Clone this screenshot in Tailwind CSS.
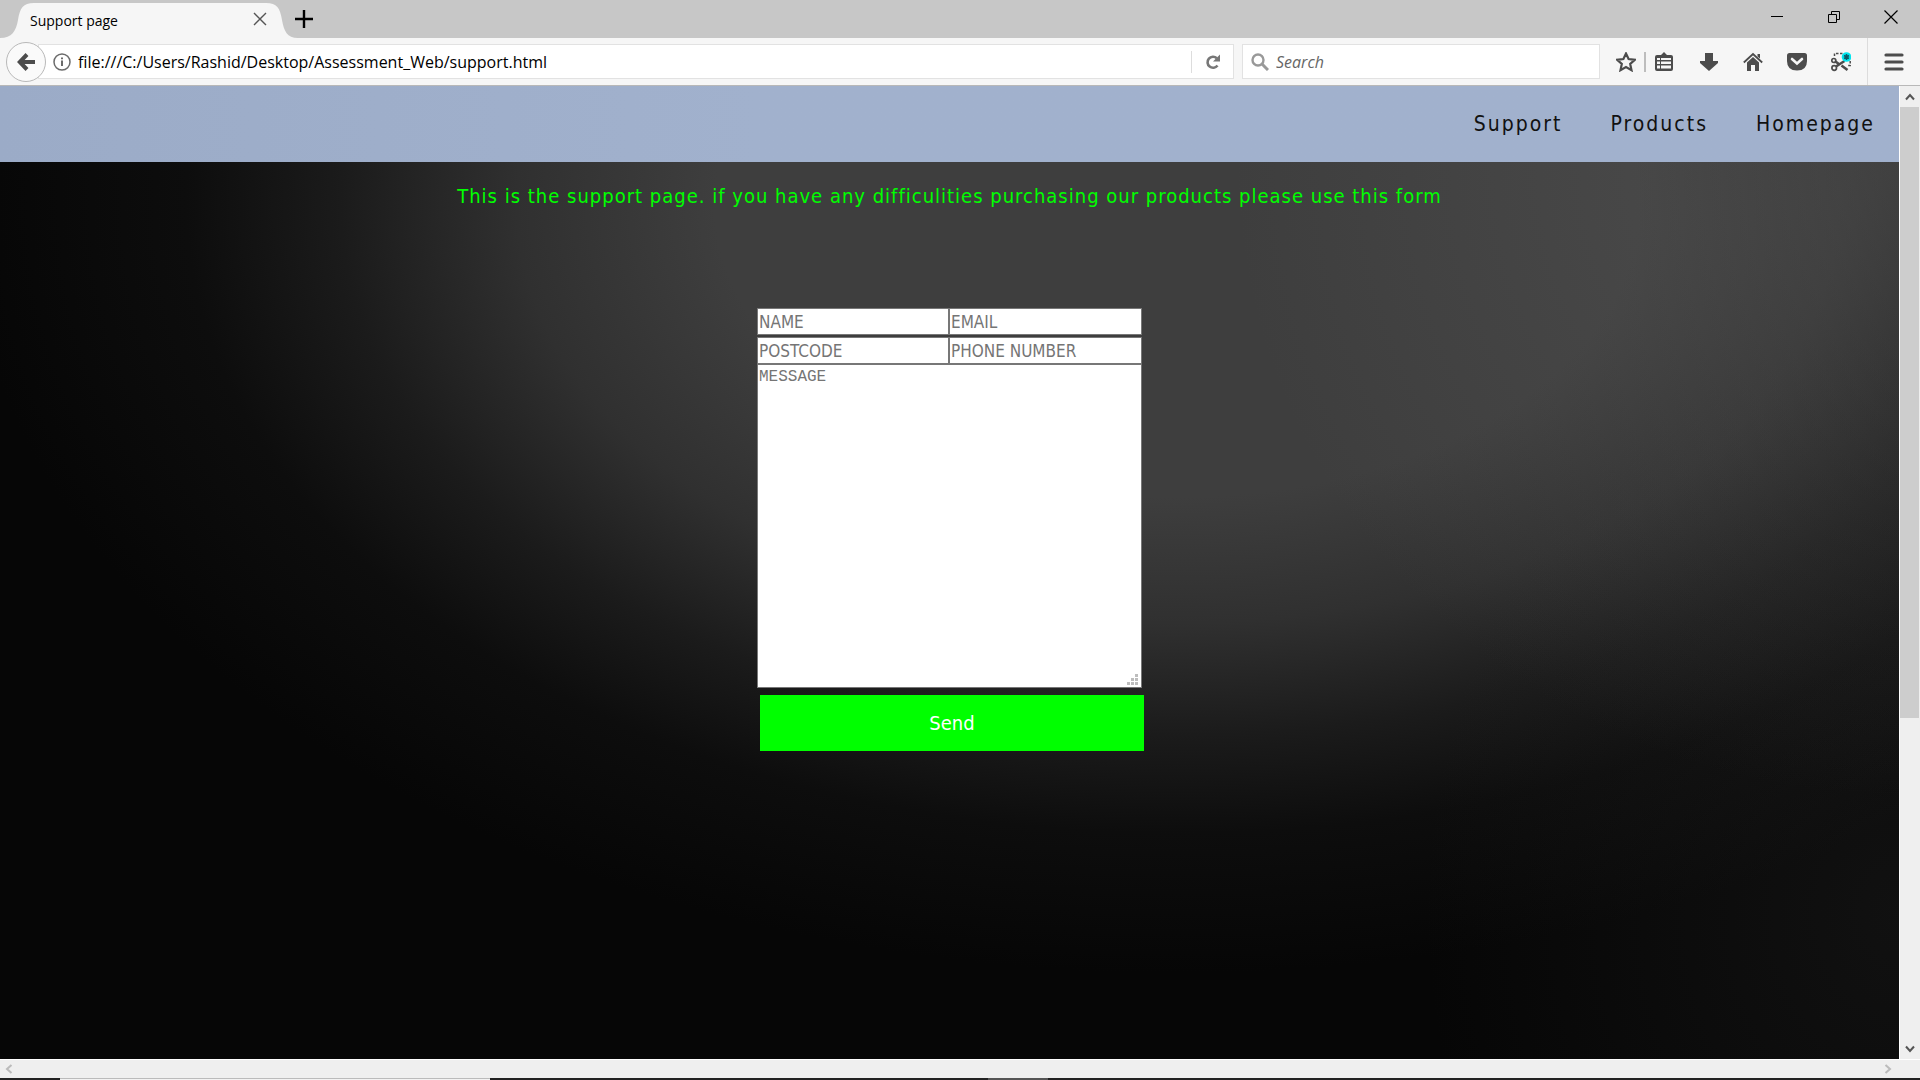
<!DOCTYPE html>
<html lang="en">
<head>
<meta charset="utf-8">
<title>Support page</title>
<script src="https://cdn.jsdelivr.net/npm/@tailwindcss/browser@4"></script>
</head>
<body class="h-screen flex flex-col overflow-hidden bg-[#f6f6f6] font-['Open_Sans',sans-serif] text-black">

<!-- Tab strip -->
<div class="flex h-[38px] shrink-0 bg-[#c7c7c7]">
  <div class="relative flex h-full w-[300px] items-center">
    <svg class="absolute inset-0 h-full w-full" viewBox="0 0 300 38" aria-hidden="true"><path d="M0 38C12 38 16 31 18 20C20 8 23 3 34 3H266C277 3 280 8 282 20C284 31 287 38 298 38Z" fill="#f6f6f6"/></svg>
    <span class="relative flex-1 pl-[30px] pt-[2px] text-[14px]">Support page</span>
    <button class="relative mr-8 size-4" aria-label="Close tab"><svg viewBox="0 0 16 16" class="size-4" stroke="#555" stroke-width="1.4"><path d="M2 2L14 14M14 2L2 14"/></svg></button>
  </div>
  <button class="w-6" aria-label="New tab"><svg viewBox="0 0 18 18" class="ml-[-5px] size-[18px]" stroke="#000" stroke-width="2.4"><path d="M0 9H18M9 0V18"/></svg></button>
  <div class="ml-auto flex items-center gap-[43px] pr-[22px] pb-1">
    <button class="size-[14px]" aria-label="Minimize"><svg viewBox="0 0 14 14" class="size-[14px]" stroke="#000"><path d="M1 6.500H13"/></svg></button>
    <button class="size-[14px]" aria-label="Restore"><svg viewBox="0 0 14 14" class="size-[14px]" fill="none" stroke="#000"><path d="M1.500 4.500H9.500V12.500H1.500ZM4.500 4V1.500H12.500V9.500H10"/></svg></button>
    <button class="size-[14px]" aria-label="Close window"><svg viewBox="0 0 14 14" class="size-[14px]" stroke="#000" stroke-width="1.2"><path d="M0.500 0.500L13.500 13.500M13.500 0.500L0.500 13.500"/></svg></button>
  </div>
</div>

<!-- Navigation toolbar -->
<div class="flex h-12 shrink-0 items-center border-b border-[#b8b8b8] pl-[6px]">
  <button class="z-10 grid size-10 shrink-0 place-items-center rounded-full border border-[#b9b9b9] bg-[#fafafa]" aria-label="Back"><svg viewBox="0 0 18 18" class="size-[18px]" fill="none" stroke="#4c4c4c" stroke-width="4"><path d="M10 1.500L2.800 9L10 16.500M3 9H18"/></svg></button>
  <div class="-ml-2 flex h-[35px] flex-1 items-center border border-[#e2e2e2] bg-white pl-[14px]">
    <svg viewBox="0 0 18 18" class="size-[18px] shrink-0" fill="none" stroke="#6b6b6b"><circle cx="9" cy="9" r="8" stroke-width="1.500"/><path d="M9 7.500V13M9 4.500V6.300" stroke-width="2"/></svg>
    <input aria-label="Address" class="ml-[7px] h-full min-w-0 flex-1 text-[16px] outline-none" value="file:///C:/Users/Rashid/Desktop/Assessment_Web/support.html">
    <button class="grid h-[22px] w-[42px] place-items-center border-l border-[#ddd]" aria-label="Reload"><svg viewBox="0 0 16 16" class="size-4" fill="none" stroke="#777" stroke-width="2.600"><path d="M12.500 11.500A5.500 5.500 0 1 1 11.800 4.200"/><path d="M15 0.500V7.500H8Z" fill="#777" stroke="none"/></svg></button>
  </div>
  <label class="ml-2 flex h-[35px] w-[358px] shrink-0 items-center border border-[#e2e2e2] bg-white pl-2">
    <svg viewBox="0 0 18 18" class="size-[18px]" fill="none" stroke="#999" stroke-width="2.400"><circle cx="7" cy="7" r="5.500"/><path d="M11 11L17 17" stroke-width="3"/></svg>
    <input aria-label="Search" placeholder="Search" class="ml-[7px] h-full min-w-0 flex-1 text-[16px] italic outline-none placeholder:text-[#666]">
  </label>
  <div class="flex h-full shrink-0 items-center text-[#4c4c4c]">
    <button class="ml-4 size-5" aria-label="Bookmark this page"><svg viewBox="0 0 20 20" class="size-5" fill="none" stroke="currentColor" stroke-width="2.200"><path d="M10 1.500L12.600 7L18.800 7.800L14.200 12L15.500 18.200L10 15.100L4.500 18.200L5.800 12L1.200 7.800L7.400 7Z"/></svg></button>
    <span class="ml-2 h-5 w-[2px] bg-[#bdbdbd]"></span>
    <button class="ml-2 size-5" aria-label="Bookmarks"><svg viewBox="0 0 20 20" class="size-5"><path fill="currentColor" d="M10 0L13 3H17Q19 3 19 5V17Q19 19 17 19H3Q1 19 1 17V5Q1 3 3 3H7Z"/><path fill="#f6f6f6" d="M3 6H6V8H3ZM7 6H17V8H7ZM3 9.500H6V12H3ZM7 9.500H17V12H7ZM3 13.500H6V16.500H3ZM7 13.500H17V16.500H7Z"/></svg></button>
    <button class="ml-[25px] size-5" aria-label="Downloads"><svg viewBox="0 0 20 20" class="size-5" fill="currentColor"><path d="M6 1H14V9H19V11L10 19L1 11V9H6Z"/></svg></button>
    <button class="ml-6 size-5" aria-label="Home"><svg viewBox="0 0 20 20" class="size-5"><path d="M0.800 10.500L10 2L19.200 10.500" fill="none" stroke="currentColor" stroke-width="1.800"/><path fill="currentColor" d="M10 5L16 10.500V19H12V13H8V19H4V10.500ZM14.500 2H17V6.500L14.500 4.500Z"/></svg></button>
    <button class="ml-6 size-5" aria-label="Pocket"><svg viewBox="0 0 20 20" class="size-5"><path fill="currentColor" d="M2.500 1H17.500Q20 1 20 3.500V9Q20 18.500 10 18.500Q0 18.500 0 9V3.500Q0 1 2.500 1Z"/><path d="M5 7L10 11.500L15 7" fill="none" stroke="#f6f6f6" stroke-width="2.600" stroke-linecap="round"/></svg></button>
    <button class="ml-6 size-5" aria-label="Screen capture"><svg viewBox="0 0 20 20" class="size-5" fill="none" stroke="currentColor"><path d="M3.500 4V1.500H12M19.200 9V13.500H17" stroke-width="1.500" stroke-dasharray="2.500 1.500"/><circle cx="2.800" cy="8.500" r="2" stroke-width="1.700"/><circle cx="3.200" cy="16" r="2.300" stroke-width="1.700"/><path d="M4.500 9.500L7.500 11.700M10.500 13.500L16.500 18M5 14.500L13.500 9" stroke-width="2.600"/><circle cx="15.500" cy="5" r="4.800" fill="#00e5ee" stroke="none"/><path d="M15.500 2V8M13 3.500L18 6.500M18 3.500L13 6.500" stroke="#0c5a66" stroke-width="1.500"/></svg></button>
    <span class="ml-4 h-full w-px bg-[#dcdcdc]"></span>
    <button class="mx-4 h-5 w-5" aria-label="Menu"><svg viewBox="0 0 20 20" class="size-5" stroke="currentColor" stroke-width="3.200" stroke-linecap="round"><path d="M2 3H18M2 10H18M2 17H18"/></svg></button>
  </div>
</div>

<!-- Viewport with scrollbars -->
<div class="flex min-h-0 flex-1">
  <main class="flex min-w-0 flex-1 flex-col bg-[#060606] bg-[radial-gradient(ellipse_35%_65%_at_100%_8%,rgba(100,100,100,0.4),transparent),radial-gradient(ellipse_25%_60%_at_100%_85%,rgba(60,60,60,0.2),transparent),radial-gradient(ellipse_58%_72%_at_62%_12%,#3e3e3e_0%,#3e3e3e_42%,#303030_60%,#1b1b1b_76%,#0d0d0d_90%,transparent_110%)] font-['DejaVu_Sans_Condensed',sans-serif]">
    <nav class="flex h-[76px] shrink-0 items-center justify-end gap-12 bg-linear-to-r from-[#9babc7] to-[#a1b1cd] to-40% pt-[2px] pr-6 text-[21px] tracking-[2px] text-[#111]">
      <a href="#">Support</a>
      <a href="#">Products</a>
      <a href="#">Homepage</a>
    </nav>
    <p class="mt-5 text-center text-[20px] leading-7 tracking-[1px] text-[#00ff00]">This is the support page. if you have any difficulities purchasing our products please use this form</p>
    <form class="mx-auto mt-[98px] w-[385px]">
      <div class="grid grid-cols-[192px_193px] gap-y-[2px] text-[17px]">
        <input aria-label="Name" placeholder="NAME" class="h-[27px] min-w-0 border border-[#777] bg-white px-px placeholder:text-[#757575]">
        <input aria-label="Email" placeholder="EMAIL" class="h-[27px] min-w-0 border border-[#777] bg-white px-px placeholder:text-[#757575]">
        <input aria-label="Postcode" placeholder="POSTCODE" class="h-[27px] min-w-0 border border-[#777] bg-white px-px placeholder:text-[#757575]">
        <input aria-label="Phone number" placeholder="PHONE NUMBER" class="h-[27px] min-w-0 border border-[#777] bg-white px-px placeholder:text-[#757575]">
      </div>
      <div class="relative">
        <textarea aria-label="Message" placeholder="MESSAGE" class="block h-[324px] w-full resize-none border border-[#777] bg-white px-px py-[2px] font-['Liberation_Mono',monospace] text-[16px] leading-5 placeholder:text-[#757575]"></textarea>
        <svg class="absolute right-1 bottom-[3px] h-[11px] w-[11px]" viewBox="0 0 11 11" fill="#bdbdbd" aria-hidden="true"><path d="M8 0H11V3H8ZM4 4H7V7H4ZM8 4H11V7H8ZM0 8H3V11H0ZM4 8H7V11H4ZM8 8H11V11H8Z"/></svg>
      </div>
      <button type="button" class="mt-[7px] ml-[3px] h-14 w-[384px] bg-[#00ff00] text-[20px] text-white">Send</button>
    </form>
  </main>
  <div class="flex w-[21px] shrink-0 flex-col border-l border-white bg-[#efefef]">
    <button class="grid h-[21px] place-items-center" aria-label="Scroll up"><svg viewBox="0 0 10 8" class="h-2 w-[10px]" fill="none" stroke="#555" stroke-width="2"><path d="M1 6.500L5 2L9 6.500"/></svg></button>
    <div class="mr-px h-[611px] bg-[#cdcdcd]"></div>
    <button class="mt-auto grid h-[21px] place-items-center" aria-label="Scroll down"><svg viewBox="0 0 10 8" class="h-2 w-[10px]" fill="none" stroke="#555" stroke-width="2"><path d="M1 1.500L5 6L9 1.500"/></svg></button>
  </div>
</div>
<div class="flex h-[19px] shrink-0 items-center justify-between border-t border-white bg-[#efefef] pr-7 pl-[5px]">
  <button class="h-[10px] w-2" aria-label="Scroll left"><svg viewBox="0 0 8 10" class="h-[10px] w-2" fill="none" stroke="#bbb" stroke-width="2"><path d="M6.500 1L2 5L6.500 9"/></svg></button>
  <button class="h-[10px] w-2" aria-label="Scroll right"><svg viewBox="0 0 8 10" class="h-[10px] w-2" fill="none" stroke="#bbb" stroke-width="2"><path d="M1.500 1L6 5L1.500 9"/></svg></button>
</div>
<!-- Top edge of the taskbar -->
<div class="flex h-[2px] shrink-0 bg-[#222]">
  <div class="ml-[60px] w-[430px] border-t border-[#bbb] bg-[#f2f2f2]"></div>
  <div class="ml-[498px] w-[60px] bg-[#555]"></div>
</div>
</body>
</html>
